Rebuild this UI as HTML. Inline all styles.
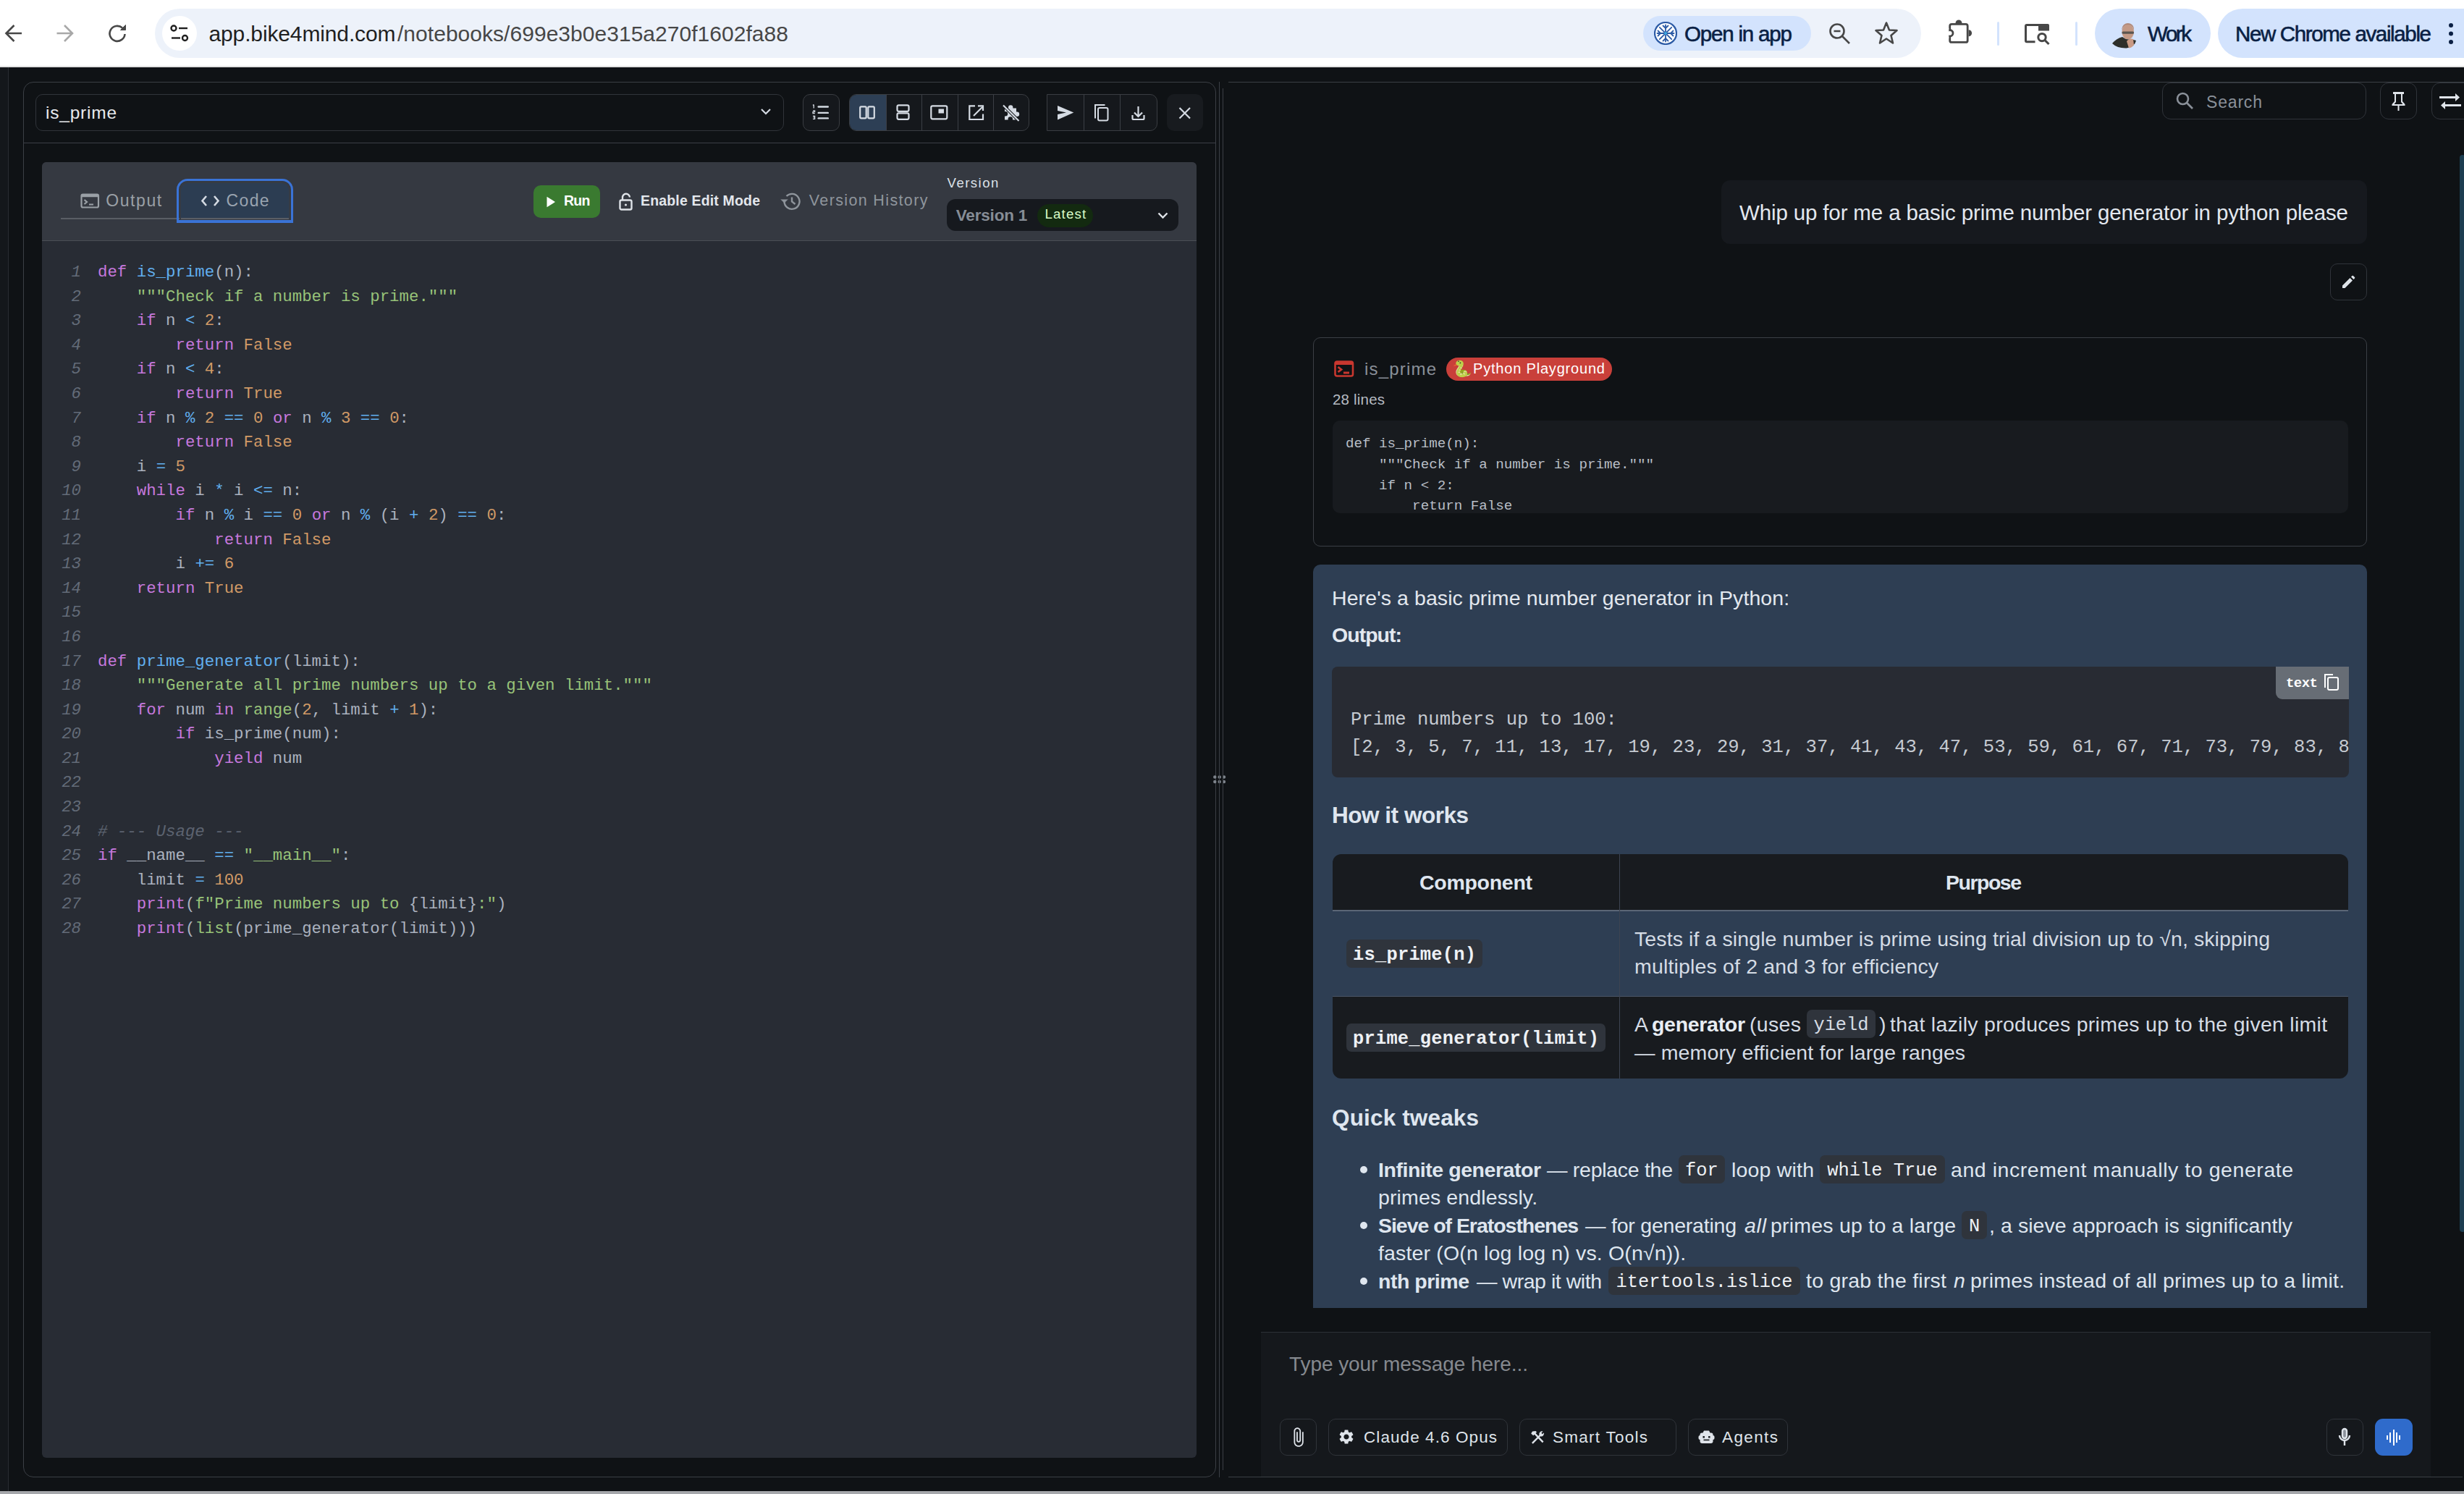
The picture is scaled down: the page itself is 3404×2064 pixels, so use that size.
<!DOCTYPE html>
<html><head><meta charset="utf-8">
<style>
*{box-sizing:border-box;margin:0;padding:0}
html,body{width:3404px;height:2064px;overflow:hidden;background:#0f1215;font-family:"Liberation Sans",sans-serif}
.a{position:absolute}
.mono{font-family:"Liberation Mono",monospace}
#chrome{left:0;top:0;width:3404px;height:93px;background:#fff;border-bottom:2px solid #e3e3e3}
#app{left:0;top:93px;width:3404px;height:1967px;background:#0f1215}
.vl{width:1px;background:#3b3f45}
.hl{height:1px;background:#3b3f45}
.tb{border:1px solid #30343a;background:#0f1215}

.code,.codenums{font-size:22.4px;line-height:33.6px;color:#abb2bf}
.codenums{font-style:italic;color:#636b78}
k{color:#c678dd} f{color:#61afef} g{color:#98c379} n{color:#d19a66} o{color:#61afef} c{color:#5c6370;font-style:italic}
</style></head><body>
<div id="chrome" class="a"></div>
<div id="app" class="a"></div>
<svg class="a" style="left:0;top:0" width="200" height="93" viewBox="0 0 200 93" fill="none" stroke-width="2.6"><path d="M30 46 H8.5 M19.5 35 L8.5 46 L19.5 57" stroke="#474747"/><path d="M78.5 46 H100 M89 35 L100 46 L89 57" stroke="#a8a8a8"/><path d="M172.5 47 A10.5 10.5 0 1 1 169 38.5" stroke="#474747"/><path d="M173.5 34.5 V41.5 H166.5 Z" fill="#474747" stroke="#474747" stroke-width="1"/></svg>
<div class="a" style="left:214px;top:12px;width:2440px;height:68px;border-radius:34px;background:#edf2fa"></div>
<div class="a" style="left:224px;top:22px;width:48px;height:48px;border-radius:24px;background:#ffffff"></div>
<svg class="a" style="left:224px;top:22px" width="48" height="48" viewBox="0 0 48 48" fill="none" stroke="#1f1f1f" stroke-width="2.4"><circle cx="16" cy="17" r="3.5"/><path d="M23 17 H35"/><circle cx="31.5" cy="30.5" r="3.5"/><path d="M13 30.5 H25"/></svg>
<div class="a" style="left:288.5px;top:26.6px;font-size:30px;line-height:39px;color:#1f1f1f;white-space:pre;letter-spacing:-0.135px;">app.bike4mind.com</div>
<div class="a" style="left:549.0px;top:26.6px;font-size:30px;line-height:39px;color:#474747;white-space:pre;letter-spacing:0.033px;">/notebooks/699e3b0e315a270f1602fa88</div>
<div class="a" style="left:2270px;top:22px;width:232px;height:48px;border-radius:24px;background:#d3e3fd"></div>
<svg class="a" style="left:2285px;top:30px" width="32" height="32" viewBox="0 0 32 32"><circle cx="16" cy="16" r="15" fill="#ffffff" stroke="#2c5aa5" stroke-width="2.2"/><g stroke="#2c5aa5" stroke-width="1.8" fill="none" stroke-linecap="round"><path d="M16 4.5 V27.5 M4.5 16 H27.5 M7.8 7.8 L24.2 24.2 M24.2 7.8 L7.8 24.2"/><path d="M12.5 5.5 L16 9 L19.5 5.5 M12.5 26.5 L16 23 L19.5 26.5 M5.5 12.5 L9 16 L5.5 19.5 M26.5 12.5 L23 16 L26.5 19.5"/></g><circle cx="16" cy="16" r="2" fill="#3fa9e0"/></svg>
<div class="a" style="left:2327.0px;top:27.8px;font-size:29.5px;line-height:38px;color:#0a1f44;white-space:pre;letter-spacing:-1.175px;-webkit-text-stroke:0.6px #0a1f44;">Open in app</div>
<svg class="a" style="left:2524px;top:29px" width="36" height="36" viewBox="0 0 36 36" fill="none" stroke="#474747" stroke-width="2.6"><circle cx="14" cy="14" r="9.5"/><path d="M21 21 L31 31 M9.5 14 H18.5"/></svg>
<svg class="a" style="left:2588px;top:28px" width="36" height="36" viewBox="0 0 36 36" fill="none" stroke="#474747" stroke-width="2.6" stroke-linejoin="round"><path d="M18 3.5 L22 13.5 L32.5 14 L24.5 21 L27 31.5 L18 25.5 L9 31.5 L11.5 21 L3.5 14 L14 13.5 Z"/></svg>
<svg class="a" style="left:2688px;top:24px" width="40" height="40" viewBox="0 0 40 40"><rect x="5.7" y="9.4" width="24.5" height="25" rx="2.5" fill="none" stroke="#474747" stroke-width="2.8"/><path d="M13.5 8 a4.5 4.5 0 0 1 9 0 Z" fill="#474747"/><path d="M31.6 17.3 a4.5 4.5 0 0 1 0 9 Z" fill="#474747"/><circle cx="5.7" cy="21.8" r="4.3" fill="#ffffff" stroke="#474747" stroke-width="2.8"/><rect x="0" y="15" width="4.3" height="14" fill="#ffffff"/></svg>
<div class="a" style="left:2759px;top:30px;width:3px;height:33px;border-radius:2px;background:#d3e3fd"></div>
<svg class="a" style="left:2794px;top:28px" width="40" height="36" viewBox="0 0 40 36"><path d="M17.5 29.7 H6 a1.5 1.5 0 0 1 -1.5 -1.5 V8 a1.5 1.5 0 0 1 1.5 -1.5 H23" fill="none" stroke="#474747" stroke-width="3"/><path d="M22 5 H35 a2 2 0 0 1 2 2 V14.5 H22 Z" fill="#474747"/><circle cx="27" cy="23.6" r="5.2" fill="none" stroke="#474747" stroke-width="3"/><path d="M30.8 27.4 L36.5 33" stroke="#474747" stroke-width="3"/></svg>
<div class="a" style="left:2867px;top:30px;width:3px;height:33px;border-radius:2px;background:#d3e3fd"></div>
<div class="a" style="left:2894px;top:12px;width:160px;height:68px;border-radius:34px;background:#d3e3fd"></div>
<svg class="a" style="left:2916px;top:28px" width="38" height="40" viewBox="0 0 38 40"><ellipse cx="23.7" cy="16" rx="8.3" ry="10.5" fill="#c49a86"/><path d="M15.5 14 a8.3 9 0 0 1 16.5 0 V11 a8.3 8 0 0 0 -16.5 0 Z" fill="#b08878"/><rect x="15.5" y="15.5" width="16.5" height="3.2" rx="1.5" fill="#5a5550"/><path d="M2 32 Q8 25 16 23 Q22 28 28 26 L35 28 Q33 37 22 38.5 Q9 39 2 32 Z" fill="#2d2f2a"/><path d="M22 29 Q26 24 31 26 L32 34 Q29 38 25 38.5 Z" fill="#c99a84"/></svg>
<div class="a" style="left:2967.0px;top:27.8px;font-size:29.5px;line-height:38px;color:#0a1f44;white-space:pre;letter-spacing:-2.432px;-webkit-text-stroke:0.6px #0a1f44;">Work</div>
<div class="a" style="left:3064px;top:12px;width:380px;height:68px;border-radius:34px;background:#d3e3fd"></div>
<div class="a" style="left:3088.0px;top:27.8px;font-size:29.5px;line-height:38px;color:#0a1f44;white-space:pre;letter-spacing:-1.355px;-webkit-text-stroke:0.6px #0a1f44;">New Chrome available</div>
<svg class="a" style="left:3378px;top:30px" width="16" height="34" viewBox="0 0 16 34" fill="#0a1f44"><circle cx="8" cy="5" r="3"/><circle cx="8" cy="16.5" r="3"/><circle cx="8" cy="28" r="3"/></svg>

<!-- left strip -->
<div class="a" style="left:0;top:93px;width:11px;height:1967px;background:#14171b"></div>
<div class="a vl" style="left:11px;top:93px;height:1967px;background:#2a2d32"></div>
<!-- left panel border -->
<div class="a" style="left:32px;top:113px;width:1648px;height:1928px;border:1px solid #3b3f45;border-radius:14px"></div>
<div class="a hl" style="left:33px;top:197px;width:1646px"></div>
<!-- select -->
<div class="a" style="left:49px;top:130px;width:1034px;height:51px;border:1px solid #30343a;border-radius:10px;background:#0f1215"></div>
<!-- code card -->
<div class="a" style="left:58px;top:224px;width:1595px;height:1790px;border-radius:6px;background:#282c34;overflow:hidden">
  <div class="a" style="left:0;top:0;width:1595px;height:109px;background:#353941;border-bottom:1px solid #4a4e55"></div>
</div>

<!-- select content -->
<svg class="a" style="left:1049px;top:147px" width="18" height="14" viewBox="0 0 18 14"><path d="M3 4 L9 10 L15 4" stroke="#d5dbe3" stroke-width="2.2" fill="none"/></svg>
<!-- toolbar -->
<div class="a" style="left:1109px;top:130px;width:51px;height:51px;border:1px solid #3a3d42;border-radius:10px;background:#15181c"></div>
<svg class="a" style="left:1109px;top:130px" width="51" height="51" viewBox="0 0 51 51">
 <g fill="#d5dbe3"><rect x="20.5" y="16.3" width="15.5" height="2.4" rx="1.2"/><rect x="20.5" y="24.7" width="15.5" height="2.4" rx="1.2"/><rect x="20.5" y="32.2" width="15.5" height="2.4" rx="1.2"/></g>
 <g fill="none" stroke="#d5dbe3" stroke-width="1.3"><path d="M15.2 14.5 V19.5 M14 15.5 L15.2 14.5"/><path d="M14 22.8 H16.6 V24.6 H14 V26.6 H16.8"/><path d="M14 30.3 H16.6 V32.2 H14.5 M16.6 32.2 V34.4 H14"/></g>
</svg>
<div class="a" style="left:1173px;top:130px;width:249px;height:51px;border:1px solid #3a3d42;border-radius:10px;background:#15181c;overflow:hidden">
  <div class="a" style="left:0;top:0;width:50px;height:49px;background:#2d3f55"></div>
  <div class="a vl" style="left:50px;top:0;height:49px"></div>
  <div class="a vl" style="left:99px;top:0;height:49px"></div>
  <div class="a vl" style="left:149px;top:0;height:49px"></div>
  <div class="a vl" style="left:198px;top:0;height:49px"></div>
</div>
<svg class="a" style="left:1173px;top:130px" width="249" height="51" viewBox="0 0 249 51" fill="none" stroke="#d5dbe3" stroke-width="2.2">
 <rect x="15.2" y="17.3" width="8.5" height="16" rx="1.5"/><rect x="26.3" y="17.3" width="8.5" height="16" rx="1.5"/>
 <rect x="66.5" y="15.3" width="16" height="8.5" rx="2"/><rect x="66.5" y="26.3" width="16" height="8.5" rx="2"/>
 <rect x="113.3" y="16.3" width="22" height="18" rx="2"/><rect x="123.5" y="20.5" width="7.5" height="6" fill="#d5dbe3" stroke="none"/>
 <path d="M174 16.3 H166.3 V35 H185 V27.5"/><path d="M172 30 L184 18"/><path d="M178 16.3 H185 V23"/>
 <g transform="translate(224,25.5)"><path fill="#d5dbe3" stroke="none" d="M-9 -6 H-4 V-7 a3.2 3.2 0 0 1 6.4 0 V-6 H7 V-1 H8 a3.2 3.2 0 0 1 0 6.4 H7 V10 H2 V9 a3.2 3.2 0 0 0 -6.4 0 V10 H-9 V5 H-8 a3.2 3.2 0 0 0 0 -6.4 H-9 Z"/><path d="M-12 -11 L11 12" stroke="#15181c" stroke-width="4"/><path d="M-11 -10 L10.5 11.5" stroke-width="2.2"/></g>
</svg>
<div class="a" style="left:1446px;top:130px;width:153px;height:51px;border:1px solid #3a3d42;border-radius:0 10px 10px 0;background:#15181c">
  <div class="a vl" style="left:50px;top:0;height:49px"></div>
  <div class="a vl" style="left:100px;top:0;height:49px"></div>
</div>
<svg class="a" style="left:1446px;top:130px" width="153" height="51" viewBox="0 0 153 51">
 <path d="M15 16 L37.3 25.5 L15 35.5 L15 28 L27 25.5 L15 23 Z" fill="#d5dbe3"/>
 <g fill="none" stroke="#d5dbe3" stroke-width="2"><path d="M67 33.5 V15 H80.5"/><rect x="71" y="19" width="13.5" height="17.5" rx="2"/></g>
 <g fill="none" stroke="#d5dbe3" stroke-width="2.2"><path d="M126.5 17 V31 M121 25.5 L126.5 31 L132 25.5"/><path d="M118.5 29 V33.5 a1.5 1.5 0 0 0 1.5 1.5 H133 a1.5 1.5 0 0 0 1.5 -1.5 V29"/></g>
</svg>
<div class="a" style="left:1612px;top:130px;width:50px;height:51px;border-radius:10px;background:#181b1f"></div>
<svg class="a" style="left:1612px;top:130px" width="50" height="51" viewBox="0 0 50 51"><path d="M17.5 19 L32 33.5 M32 19 L17.5 33.5" stroke="#d5dbe3" stroke-width="2.2"/></svg>
<div class="a" style="left:63.0px;top:139.5px;font-size:24.5px;line-height:32px;color:#e8eaed;white-space:pre;letter-spacing:0.777px;">is_prime</div>
<div class="a" style="left:84px;top:301px;width:315px;height:2px;background:#5a5e65"></div>
<svg class="a" style="left:111px;top:267px" width="27" height="21" viewBox="0 0 27 21" fill="none" stroke="#9aa0a6" stroke-width="2.2"><rect x="1.5" y="1.5" width="23.5" height="18" rx="2"/><path d="M1.5 3.5 H25" stroke-width="3.5"/><path d="M5.5 9 L9 12 L5.5 15 M12 15.5 H18"/></svg>
<div class="a" style="left:146.2px;top:261.7px;font-size:23px;line-height:30px;color:#9aa0a6;white-space:pre;letter-spacing:1.587px;">Output</div>
<div class="a" style="left:244px;top:247px;width:161px;height:61px;border:3px solid #3a73d6;border-bottom-width:4px;border-radius:15px 15px 0 0"></div>
<div class="a" style="left:248px;top:251px;width:153px;height:52px;border:2px solid #363b44;border-bottom:none;border-radius:12px 12px 0 0;background:#2c3d52"></div>
<div class="a" style="left:250px;top:301px;width:149px;height:2px;background:#5a5e65"></div>
<svg class="a" style="left:277px;top:269px" width="27" height="17" viewBox="0 0 27 17" fill="none" stroke="#d5dbe3" stroke-width="2.6"><path d="M8 2 L2.5 8.5 L8 15 M19 2 L24.5 8.5 L19 15"/></svg>
<div class="a" style="left:312.6px;top:261.7px;font-size:23px;line-height:30px;color:#9aa4b0;white-space:pre;letter-spacing:1.333px;">Code</div>
<div class="a" style="left:737px;top:256px;width:92px;height:45px;border-radius:10px;background:#3a7a30"></div>
<svg class="a" style="left:755px;top:271px" width="13" height="16" viewBox="0 0 13 16"><path d="M0.5 0.8 L12 8 L0.5 15.2 Z" fill="#fff"/></svg>
<div class="a" style="left:779.0px;top:265.0px;font-size:19.5px;line-height:25px;color:#ffffff;white-space:pre;letter-spacing:-0.745px;font-weight:bold;">Run</div>
<svg class="a" style="left:854px;top:266px" width="22" height="25" viewBox="0 0 22 25" fill="none" stroke="#dfe3e8" stroke-width="2.4"><rect x="2.5" y="10.5" width="16" height="13" rx="2"/><path d="M6 10.5 V7 a5 5 0 0 1 10 -0.5"/><circle cx="10.5" cy="17" r="1.6" fill="#dfe3e8" stroke="none"/></svg>
<div class="a" style="left:885.0px;top:265.0px;font-size:19.5px;line-height:25px;color:#e3e7ec;white-space:pre;letter-spacing:0.167px;font-weight:bold;">Enable Edit Mode</div>
<svg class="a" style="left:1077px;top:264px" width="32" height="29" viewBox="0 0 32 29" fill="none" stroke="#8f959c" stroke-width="2.4"><path d="M6.5 14.5 a10.5 10.5 0 1 0 3 -7.5"/><path d="M2 11.5 L6.5 16 L11 11.5" fill="#8f959c" stroke-width="1"/><path d="M17 8.5 V14.5 L21.5 18"/></svg>
<div class="a" style="left:1117.8px;top:263.3px;font-size:21.5px;line-height:28px;color:#8f959c;white-space:pre;letter-spacing:1.360px;">Version History</div>
<div class="a" style="left:1308.6px;top:240.7px;font-size:18.5px;line-height:24px;color:#dde2e8;white-space:pre;letter-spacing:1.502px;">Version</div>
<div class="a" style="left:1308px;top:275px;width:320px;height:44px;border-radius:12px;background:#16191e"></div>
<div class="a" style="left:1320.7px;top:282.8px;font-size:22.5px;line-height:29px;color:#868d96;white-space:pre;letter-spacing:-0.170px;font-weight:bold;">Version 1</div>
<div class="a" style="left:1433px;top:282px;width:77px;height:32px;border-radius:16px;background:#132a10"></div>
<div class="a" style="left:1443.5px;top:284.4px;font-size:18.7px;line-height:24px;color:#d9fbc8;white-space:pre;letter-spacing:1.142px;">Latest</div>
<svg class="a" style="left:1598px;top:291px" width="17" height="13" viewBox="0 0 17 13"><path d="M2.5 3.5 L8.5 9.5 L14.5 3.5" stroke="#dfe3e8" stroke-width="2.4" fill="none"/></svg>

<!-- code -->
<pre class="a mono codenums" style="left:58px;top:360px;width:54px;text-align:right">1
2
3
4
5
6
7
8
9
10
11
12
13
14
15
16
17
18
19
20
21
22
23
24
25
26
27
28</pre>
<pre class="a mono code" style="left:135px;top:360px"><k>def</k> <f>is_prime</f>(n):
    <g>"""Check if a number is prime."""</g>
    <k>if</k> n <o>&lt;</o> <n>2</n>:
        <k>return</k> <n>False</n>
    <k>if</k> n <o>&lt;</o> <n>4</n>:
        <k>return</k> <n>True</n>
    <k>if</k> n <o>%</o> <n>2</n> <o>==</o> <n>0</n> <k>or</k> n <o>%</o> <n>3</n> <o>==</o> <n>0</n>:
        <k>return</k> <n>False</n>
    i <o>=</o> <n>5</n>
    <k>while</k> i <o>*</o> i <o>&lt;=</o> n:
        <k>if</k> n <o>%</o> i <o>==</o> <n>0</n> <k>or</k> n <o>%</o> (i <o>+</o> <n>2</n>) <o>==</o> <n>0</n>:
            <k>return</k> <n>False</n>
        i <o>+=</o> <n>6</n>
    <k>return</k> <n>True</n>


<k>def</k> <f>prime_generator</f>(limit):
    <g>"""Generate all prime numbers up to a given limit."""</g>
    <k>for</k> num <k>in</k> <g>range</g>(<n>2</n>, limit <o>+</o> <n>1</n>):
        <k>if</k> is_prime(num):
            <k>yield</k> num


<c># --- Usage ---</c>
<k>if</k> __name__ <o>==</o> <g>"__main__"</g>:
    limit <o>=</o> <n>100</n>
    <k>print</k>(<g>f"Prime numbers up to </g>{limit}<g>:"</g>)
    <k>print</k>(<g>list</g>(prime_generator(limit)))</pre>
<!-- splitter dots -->
<svg class="a" style="left:1674px;top:1070px" width="22" height="14" viewBox="0 0 22 14" fill="#7d838b"><circle cx="4.3" cy="3.5" r="2.2"/><circle cx="10.7" cy="3.5" r="2.2"/><circle cx="17" cy="3.5" r="2.2"/><circle cx="4.3" cy="10" r="2.2"/><circle cx="10.7" cy="10" r="2.2"/><circle cx="17" cy="10" r="2.2"/></svg>

<div class="a" style="left:2987px;top:114px;width:282px;height:51px;border:1px solid #30343a;border-radius:12px"></div>
<svg class="a" style="left:3004px;top:125px" width="30" height="30" viewBox="0 0 30 30" fill="none" stroke="#8a9099" stroke-width="2.6"><circle cx="11.5" cy="11.5" r="7.5"/><path d="M17 17 L25 25"/></svg>
<div class="a" style="left:3048.0px;top:126.0px;font-size:23px;line-height:30px;color:#8a9099;white-space:pre;letter-spacing:0.822px;">Search</div>
<div class="a" style="left:3288px;top:114px;width:51px;height:51px;border:1px solid #30343a;border-radius:12px"></div>
<svg class="a" style="left:3288px;top:114px" width="51" height="51" viewBox="0 0 51 51" fill="#dfe4ea"><path d="M18 13 H33 V16 H31 V26 L34.5 30 V32 H26.5 V39 H24.5 V32 H16.5 V30 L20 26 V16 H18 Z M22 16 V27 L19.5 30 H31.5 L29 27 V16 Z"/></svg>
<div class="a" style="left:3359px;top:114px;width:60px;height:51px;border:1px solid #30343a;border-radius:12px"></div>
<svg class="a" style="left:3367px;top:126px" width="36" height="28" viewBox="0 0 36 28" fill="#dfe4ea"><path d="M3 7 H25 V3 L31 8.5 L25 14 V10 H3 Z"/><path d="M33 18 H11 V14 L5 19.5 L11 25 V21 H33 Z"/></svg>
<div class="a" style="left:2378px;top:249px;width:892px;height:88px;border-radius:12px;background:#16191e"></div>
<div class="a" style="left:2403.0px;top:274.8px;font-size:29.5px;line-height:38px;color:#e3e8ef;white-space:pre;letter-spacing:-0.139px;">Whip up for me a basic prime number generator in python please</div>
<div class="a" style="left:3219px;top:364px;width:51px;height:51px;border:1px solid #30343a;border-radius:10px"></div>
<svg class="a" style="left:3232px;top:377px" width="25" height="25" viewBox="0 0 25 25" fill="#dfe4ea"><path d="M4 17.5 V21 H7.5 L18 10.5 L14.5 7 Z M19.5 9 L21 7.5 a1 1 0 0 0 0 -1.4 L18.9 4 a1 1 0 0 0 -1.4 0 L16 5.5 Z"/></svg>
<div class="a" style="left:1814px;top:466px;width:1456px;height:289px;border:1.5px solid #3b3f45;border-radius:10px"></div>
<svg class="a" style="left:1843px;top:498px" width="28" height="23" viewBox="0 0 28 23" fill="none" stroke="#c8372f" stroke-width="2.6"><rect x="1.5" y="1.5" width="24.5" height="20" rx="2.5"/><path d="M1.5 4 H26" stroke-width="4"/><path d="M5.5 9 L10 12.5 L5.5 16 M13 17 H21" stroke-width="2.8"/></svg>
<div class="a" style="left:1885.0px;top:494.2px;font-size:24px;line-height:31px;color:#8a9099;white-space:pre;letter-spacing:1.188px;">is_prime</div>
<div class="a" style="left:1998px;top:494px;width:229px;height:32px;border-radius:16px;background:#c9403a"></div>
<div class="a" style="left:2006px;top:496px;font-size:22px;line-height:28px">&#x1F40D;</div>
<div class="a" style="left:2035.0px;top:496.1px;font-size:20px;line-height:26px;color:#ffffff;white-space:pre;letter-spacing:0.811px;">Python Playground</div>
<div class="a" style="left:1841.0px;top:538.4px;font-size:20.5px;line-height:27px;color:#b5bac1;white-space:pre;letter-spacing:0.190px;">28 lines</div>
<div class="a" style="left:1841px;top:581px;width:1403px;height:128px;border-radius:10px;background:#181b1f;overflow:hidden"></div>
<pre class="a mono" style="left:1859px;top:599px;font-size:19.2px;line-height:28.8px;color:#b9bfc7">def is_prime(n):
    """Check if a number is prime."""
    if n &lt; 2:
        return False</pre>
<div class="a" style="left:1814px;top:780px;width:1456px;height:1027px;overflow:hidden">
<div class="a" style="left:0;top:0;width:1456px;height:1200px;border-radius:10px;background:#2e3e53"></div>
<div class="a" style="left:26.0px;top:27.6px;font-size:28.5px;line-height:37px;color:#e3e8ef;white-space:pre;letter-spacing:0.088px;">Here's a basic prime number generator in Python:</div>
<div class="a" style="left:26.0px;top:78.6px;font-size:28.5px;line-height:37px;color:#e3e8ef;white-space:pre;letter-spacing:-0.974px;font-weight:bold;">Output:</div>
<div class="a" style="left:26px;top:141px;width:1405px;height:153px;border-radius:8px 0 8px 8px;background:#282b33;overflow:hidden"><pre class="a mono" style="left:26px;top:55px;font-size:25.56px;line-height:38px;color:#c5cad1">Prime numbers up to 100:
[2, 3, 5, 7, 11, 13, 17, 19, 23, 29, 31, 37, 41, 43, 47, 53, 59, 61, 67, 71, 73, 79, 83, 89, 97]</pre><div class="a" style="left:1304px;top:0;width:101px;height:45px;border-radius:0 0 0 9px;background:#676d75"></div></div>
<div class="a mono" style="left:1344.0px;top:152.4px;font-size:19px;line-height:25px;color:#ffffff;white-space:pre;letter-spacing:-0.542px;font-weight:bold;">text</div>
<svg class="a" style="left:1395px;top:149px" width="26" height="28" viewBox="0 0 26 28" fill="none" stroke="#ffffff" stroke-width="2"><path d="M3 21 V3 H14"/><rect x="7" y="7" width="14" height="17" rx="2"/></svg>
<div class="a" style="left:26.0px;top:325.6px;font-size:31.5px;line-height:41px;color:#dfe6ef;white-space:pre;letter-spacing:-0.477px;font-weight:bold;">How it works</div>
<div class="a" style="left:27px;top:400px;width:1403px;height:310px;border-radius:12px;overflow:hidden"><div class="a" style="left:0;top:0;width:1403px;height:78px;background:#181b1f"></div><div class="a" style="left:0;top:77px;width:1403px;height:2px;background:#5b6676"></div><div class="a" style="left:0;top:196px;width:1403px;height:1px;background:#4a5567"></div><div class="a" style="left:0;top:197px;width:1403px;height:113px;background:#181b1f"></div><div class="a" style="left:396px;top:0;width:1px;height:310px;background:#3d4452"></div></div>
<div class="a" style="left:147.0px;top:420.6px;font-size:28.5px;line-height:37px;color:#dfe6ef;white-space:pre;letter-spacing:-0.285px;font-weight:bold;">Component</div>
<div class="a" style="left:874.0px;top:420.6px;font-size:28.5px;line-height:37px;color:#dfe6ef;white-space:pre;letter-spacing:-1.503px;font-weight:bold;">Purpose</div>
<div class="a" style="left:46px;top:518px;width:188px;height:39px;border-radius:7px;background:#2f343c"></div>
<div class="a mono" style="left:55.0px;top:523.4px;font-size:25.4px;line-height:33px;color:#eef1f5;white-space:pre;letter-spacing:0.242px;font-weight:bold;">is_prime(n)</div>
<div class="a" style="left:444.0px;top:498.6px;font-size:28.5px;line-height:37px;color:#d5dce5;white-space:pre;letter-spacing:0.099px;">Tests if a single number is prime using trial division up to √n, skipping</div>
<div class="a" style="left:444.0px;top:536.6px;font-size:28.5px;line-height:37px;color:#d5dce5;white-space:pre;letter-spacing:0.163px;">multiples of 2 and 3 for efficiency</div>
<div class="a" style="left:46px;top:634px;width:358px;height:39px;border-radius:7px;background:#2f343c"></div>
<div class="a mono" style="left:55.0px;top:639.4px;font-size:25.4px;line-height:33px;color:#eef1f5;white-space:pre;letter-spacing:0.231px;font-weight:bold;">prime_generator(limit)</div>
<div class="a" style="left:444.0px;top:616.6px;font-size:28.5px;line-height:37px;color:#d5dce5;white-space:pre;letter-spacing:-0.016px;">A</div>
<div class="a" style="left:468.0px;top:616.6px;font-size:28.5px;line-height:37px;color:#e8edf3;white-space:pre;letter-spacing:-0.303px;font-weight:bold;">generator</div>
<div class="a" style="left:603.0px;top:616.6px;font-size:28.5px;line-height:37px;color:#d5dce5;white-space:pre;letter-spacing:0.332px;">(uses</div>
<div class="a" style="left:682px;top:615px;width:95px;height:39px;border-radius:7px;background:#2f343c"></div>
<div class="a mono" style="left:691.4px;top:620.4px;font-size:25.4px;line-height:33px;color:#d5dce5;white-space:pre;">yield</div>
<div class="a" style="left:782.0px;top:616.6px;font-size:28.5px;line-height:37px;color:#d5dce5;white-space:pre;letter-spacing:-1.484px;">)</div>
<div class="a" style="left:797.0px;top:616.6px;font-size:28.5px;line-height:37px;color:#d5dce5;white-space:pre;letter-spacing:0.276px;">that lazily produces primes up to the given limit</div>
<div class="a" style="left:444.0px;top:655.6px;font-size:28.5px;line-height:37px;color:#d5dce5;white-space:pre;letter-spacing:0.136px;">— memory efficient for large ranges</div>
<div class="a" style="left:26.0px;top:743.6px;font-size:31.5px;line-height:41px;color:#dfe6ef;white-space:pre;letter-spacing:0.153px;font-weight:bold;">Quick tweaks</div>
<div class="a" style="left:65px;top:831px;width:10px;height:10px;border-radius:5px;background:#dfe6ef"></div>
<div class="a" style="left:65px;top:908px;width:10px;height:10px;border-radius:5px;background:#dfe6ef"></div>
<div class="a" style="left:65px;top:985px;width:10px;height:10px;border-radius:5px;background:#dfe6ef"></div>
<div class="a" style="left:90.0px;top:817.6px;font-size:28.5px;line-height:37px;color:#dfe6ef;white-space:pre;letter-spacing:-0.455px;font-weight:bold;">Infinite generator</div>
<div class="a" style="left:323.0px;top:817.6px;font-size:28.5px;line-height:37px;color:#dfe6ef;white-space:pre;letter-spacing:-0.283px;">— replace the</div>
<div class="a" style="left:505px;top:816px;width:64px;height:39px;border-radius:7px;background:#2f343c"></div>
<div class="a mono" style="left:514.1px;top:821.4px;font-size:25.4px;line-height:33px;color:#eef1f5;white-space:pre;">for</div>
<div class="a" style="left:578.0px;top:817.6px;font-size:28.5px;line-height:37px;color:#dfe6ef;white-space:pre;letter-spacing:0.193px;">loop with</div>
<div class="a" style="left:700px;top:816px;width:173px;height:39px;border-radius:7px;background:#2f343c"></div>
<div class="a mono" style="left:710.3px;top:821.4px;font-size:25.4px;line-height:33px;color:#eef1f5;white-space:pre;">while True</div>
<div class="a" style="left:881.0px;top:817.6px;font-size:28.5px;line-height:37px;color:#dfe6ef;white-space:pre;letter-spacing:0.559px;">and increment manually to generate</div>
<div class="a" style="left:90.0px;top:855.6px;font-size:28.5px;line-height:37px;color:#dfe6ef;white-space:pre;letter-spacing:0.125px;">primes endlessly.</div>
<div class="a" style="left:90.0px;top:894.6px;font-size:28.5px;line-height:37px;color:#dfe6ef;white-space:pre;letter-spacing:-1.036px;font-weight:bold;">Sieve of Eratosthenes</div>
<div class="a" style="left:376.0px;top:894.6px;font-size:28.5px;line-height:37px;color:#dfe6ef;white-space:pre;letter-spacing:-0.216px;">— for generating</div>
<div class="a" style="left:596.0px;top:894.6px;font-size:28.5px;line-height:37px;color:#dfe6ef;white-space:pre;letter-spacing:0.750px;font-style:italic;">all</div>
<div class="a" style="left:632.0px;top:894.6px;font-size:28.5px;line-height:37px;color:#dfe6ef;white-space:pre;letter-spacing:0.220px;">primes up to a large</div>
<div class="a" style="left:896px;top:893px;width:35px;height:39px;border-radius:7px;background:#2f343c"></div>
<div class="a mono" style="left:905.9px;top:898.4px;font-size:25.4px;line-height:33px;color:#eef1f5;white-space:pre;">N</div>
<div class="a" style="left:934.0px;top:894.6px;font-size:28.5px;line-height:37px;color:#dfe6ef;white-space:pre;letter-spacing:0.072px;">, a sieve approach is significantly</div>
<div class="a" style="left:90.0px;top:932.6px;font-size:28.5px;line-height:37px;color:#dfe6ef;white-space:pre;letter-spacing:0.164px;">faster (O(n log log n) vs. O(n√n)).</div>
<div class="a" style="left:90.0px;top:971.6px;font-size:28.5px;line-height:37px;color:#dfe6ef;white-space:pre;letter-spacing:-0.479px;font-weight:bold;">nth prime</div>
<div class="a" style="left:226.0px;top:971.6px;font-size:28.5px;line-height:37px;color:#dfe6ef;white-space:pre;letter-spacing:-0.457px;">— wrap it with</div>
<div class="a" style="left:408px;top:970px;width:265px;height:39px;border-radius:7px;background:#2f343c"></div>
<div class="a mono" style="left:418.6px;top:975.4px;font-size:25.4px;line-height:33px;color:#eef1f5;white-space:pre;">itertools.islice</div>
<div class="a" style="left:681.0px;top:970.6px;font-size:28.5px;line-height:37px;color:#dfe6ef;white-space:pre;letter-spacing:0.246px;">to grab the first</div>
<div class="a" style="left:885.0px;top:970.6px;font-size:28.5px;line-height:37px;color:#dfe6ef;white-space:pre;letter-spacing:-0.844px;font-style:italic;">n</div>
<div class="a" style="left:908.0px;top:970.6px;font-size:28.5px;line-height:37px;color:#dfe6ef;white-space:pre;letter-spacing:0.206px;">primes instead of all primes up to a limit.</div>
</div>
<div class="a" style="left:1742px;top:1840px;width:1616px;height:200px;background:#15181c;border-top:1px solid #2c3036"></div>
<div class="a" style="left:1781.0px;top:1867.3px;font-size:28px;line-height:36px;color:#85898f;white-space:pre;letter-spacing:-0.066px;">Type your message here...</div>
<div class="a" style="left:1768px;top:1960px;width:51px;height:51px;border:1px solid #30343a;border-radius:10px;background:#15181c"></div>
<svg class="a" style="left:1779px;top:1971px" width="29" height="29" viewBox="0 0 24 24"><path fill="#dfe4ea" d="M16.5 6v11.5c0 2.21-1.79 4-4 4s-4-1.79-4-4V5c0-1.38 1.12-2.5 2.5-2.5s2.5 1.12 2.5 2.5v10.5c0 .55-.45 1-1 1s-1-.45-1-1V6H10v9.5c0 1.38 1.12 2.5 2.5 2.5s2.5-1.12 2.5-2.5V5c0-2.21-1.79-4-4-4S7 2.79 7 5v12.5c0 3.04 2.46 5.5 5.5 5.5s5.5-2.46 5.5-5.5V6h-1.5z"/></svg>
<div class="a" style="left:1835px;top:1960px;width:248px;height:51px;border:1px solid #30343a;border-radius:10px;background:#15181c"></div>
<svg class="a" style="left:1848px;top:1973px" width="24" height="24" viewBox="0 0 24 24"><path fill="#dfe4ea" d="M19.14 12.94c.04-.3.06-.61.06-.94 0-.32-.02-.64-.07-.94l2.03-1.58c.18-.14.23-.41.12-.61l-1.92-3.32c-.12-.22-.37-.29-.59-.22l-2.39.96c-.5-.38-1.03-.7-1.62-.94L14.4 2.81c-.04-.24-.24-.41-.48-.41h-3.84c-.24 0-.43.17-.47.41L9.25 5.35c-.59.24-1.13.57-1.62.94L5.24 5.33c-.22-.08-.47 0-.59.22L2.74 8.87c-.12.21-.08.47.12.61l2.03 1.58c-.05.3-.09.63-.09.94s.02.64.07.94l-2.03 1.58c-.18.14-.23.41-.12.61l1.92 3.32c.12.22.37.29.59.22l2.39-.96c.5.38 1.03.7 1.62.94l.36 2.54c.05.24.24.41.48.41h3.84c.24 0 .44-.17.47-.41l.36-2.54c.59-.24 1.13-.56 1.62-.94l2.39.96c.22.08.47 0 .59-.22l1.92-3.32c.12-.22.07-.47-.12-.61l-2.01-1.58zM12 15.6c-1.98 0-3.6-1.62-3.6-3.6s1.62-3.6 3.6-3.6 3.6 1.62 3.6 3.6-1.62 3.6-3.6 3.6z"/></svg>
<div class="a" style="left:1884.0px;top:1970.7px;font-size:22.5px;line-height:29px;color:#dfe4ea;white-space:pre;letter-spacing:1.080px;">Claude 4.6 Opus</div>
<div class="a" style="left:2099px;top:1960px;width:217px;height:51px;border:1px solid #30343a;border-radius:10px;background:#15181c"></div>
<svg class="a" style="left:2114px;top:1976px" width="20" height="19" viewBox="0 0 20 19" fill="#dfe4ea"><path d="M3 1.5 L7.5 1 L9 2.5 L7.5 4 L18.5 15.5 L16.8 17.2 L5.8 5.8 L4.2 7.3 L1.2 4.5 Z"/><path d="M17.5 1.5 a4 4 0 0 0 -5 5 L2 17 L3.7 18.7 L14 8.3 a4 4 0 0 0 5 -5 L17 5.3 L15.3 3.7 Z"/></svg>
<div class="a" style="left:2145.0px;top:1970.7px;font-size:22.5px;line-height:29px;color:#dfe4ea;white-space:pre;letter-spacing:1.261px;">Smart Tools</div>
<div class="a" style="left:2332px;top:1960px;width:138px;height:51px;border:1px solid #30343a;border-radius:10px;background:#15181c"></div>
<svg class="a" style="left:2346px;top:1975px" width="23" height="20" viewBox="0 0 23 20"><path fill="#dfe4ea" d="M8 1.5 H15 L16.5 4.5 H18 a2.5 2.5 0 0 1 2.5 2.5 V8 a2 2 0 0 1 2 2 V12 a2 2 0 0 1 -2 2 V16 a3 3 0 0 1 -3 3 H5.5 a3 3 0 0 1 -3 -3 V14 a2 2 0 0 1 -2 -2 V10 a2 2 0 0 1 2 -2 V7 a2.5 2.5 0 0 1 2.5 -2.5 H6.5 Z"/><rect x="6.5" y="9" width="2.4" height="2.6" fill="#15181c"/><rect x="14.1" y="9" width="2.4" height="2.6" fill="#15181c"/><rect x="7.5" y="13.6" width="8" height="1.6" fill="#15181c"/></svg>
<div class="a" style="left:2379.0px;top:1970.7px;font-size:22.5px;line-height:29px;color:#dfe4ea;white-space:pre;letter-spacing:1.391px;">Agents</div>
<div class="a" style="left:3214px;top:1960px;width:51px;height:51px;border:1px solid #30343a;border-radius:10px;background:#15181c"></div>
<svg class="a" style="left:3226px;top:1971px" width="26" height="30" viewBox="0 0 26 30" fill="none" stroke="#dfe4ea" stroke-width="2.4"><rect x="10" y="3" width="6" height="13" rx="3" fill="#8a9099"/><path d="M6 12 a7 7 0 0 0 14 0 M13 19 V26"/></svg>
<div class="a" style="left:3281px;top:1960px;width:52px;height:51px;border-radius:11px;background:#2f6bcb"></div>
<svg class="a" style="left:3291px;top:1970px" width="32" height="32" viewBox="0 0 32 32" fill="#ffffff"><rect x="6" y="13" width="2" height="6"/><rect x="10" y="9" width="2" height="14"/><rect x="15" y="5" width="2" height="22"/><rect x="19" y="9" width="2" height="14"/><rect x="23" y="13" width="2" height="6"/></svg>
<div class="a" style="left:3398px;top:214px;width:8px;height:1488px;border-radius:4px;background:#1c3d50"></div>

<!-- splitter -->
<div class="a vl" style="left:1684px;top:113px;height:1928px"></div>
<div class="a vl" style="left:1689px;top:122px;height:1909px"></div>
<!-- right panel lines -->
<div class="a hl" style="left:1697px;top:113px;width:1707px"></div>
<div class="a hl" style="left:1697px;top:2040px;width:1705px"></div>
<!-- bottom grey -->
<div class="a" style="left:0;top:2060px;width:3404px;height:4px;background:#a5a7ab"></div>
</body></html>
